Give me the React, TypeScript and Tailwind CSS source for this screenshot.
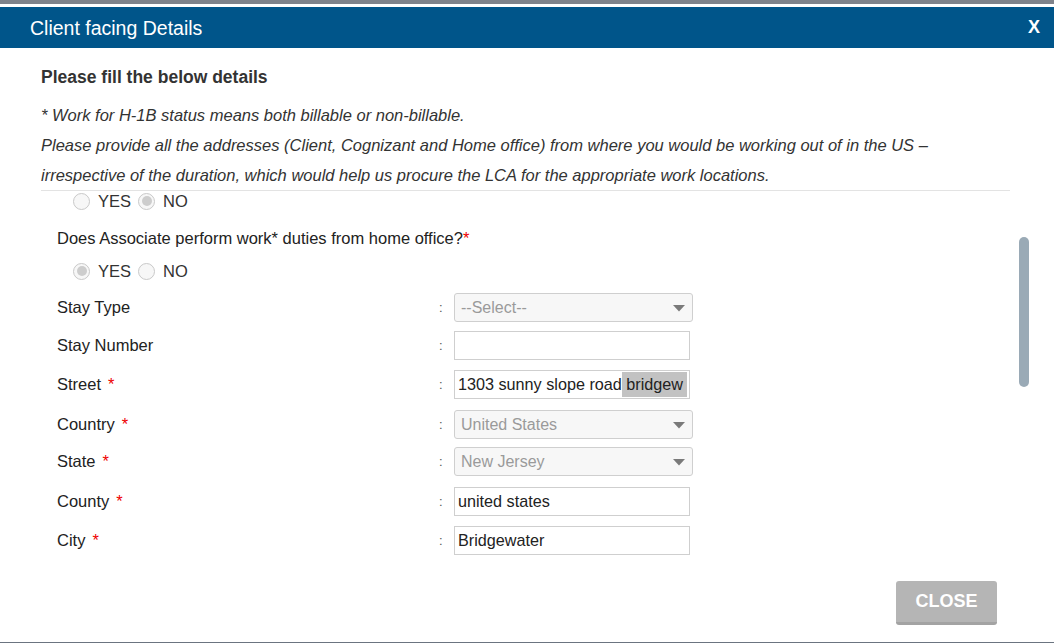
import React from 'react';

type Row = {
  label: string;
  required?: boolean;
  kind: 'select' | 'input';
  value?: string;
  h: string;
};

const rows: Row[] = [
  { label: 'Stay Type', kind: 'select', value: '--Select--', h: 'h-[38px]' },
  { label: 'Stay Number', kind: 'input', value: '', h: 'h-[39px]' },
  { label: 'Street', required: true, kind: 'input', value: 'street', h: 'h-[40px]' },
  { label: 'Country', required: true, kind: 'select', value: 'United States', h: 'h-[37px]' },
  { label: 'State', required: true, kind: 'select', value: 'New Jersey', h: 'h-[40px]' },
  { label: 'County', required: true, kind: 'input', value: 'united states', h: 'h-[39px]' },
  { label: 'City', required: true, kind: 'input', value: 'Bridgewater', h: 'h-[39px]' },
];

function Radio({ checked }: { checked?: boolean }) {
  return (
    <span className="flex h-[17px] w-[17px] items-center justify-center rounded-full border border-[#c9c9c9] bg-[#f7f7f7]">
      {checked && <span className="h-[10px] w-[10px] rounded-full bg-[#cdcdcd]" />}
    </span>
  );
}

function YesNo({ yes }: { yes: boolean }) {
  return (
    <div className="flex h-[20px] items-center pl-[32px] text-[16.5px] text-[#333]">
      <Radio checked={yes} />
      <span className="ml-[8px]">YES</span>
      <span className="ml-[7px]">
        <Radio checked={!yes} />
      </span>
      <span className="ml-[8px]">NO</span>
    </div>
  );
}

function Field({ row }: { row: Row }) {
  if (row.kind === 'select') {
    return (
      <div className="flex h-[29px] w-[239px] items-center justify-between rounded-[3px] border border-[#cfcfcf] bg-[#f7f7f7] pl-[6px] pr-[6px] text-[16px] text-[#9a9a9a]">
        <span>{row.value}</span>
        <svg width="14" height="8" viewBox="0 0 14 8">
          <path d="M1 1 L13 1 L7 7.5 Z" fill="#7a7a7a" />
        </svg>
      </div>
    );
  }
  return (
    <div className="flex h-[29px] w-[236px] items-center overflow-hidden whitespace-nowrap border border-[#cfcfcf] bg-white pl-[3px] text-[16.2px] text-[#222]">
      {row.value === 'street' ? (
        <>
          <span>1303 sunny slope road</span>
          <span className="bg-[#c2c2c2] pr-[4px]">{'\u00a0'}bridgew</span>
        </>
      ) : (
        <span>{row.value}</span>
      )}
    </div>
  );
}

export default function App() {
  return (
    <div
      className="flex h-[643px] w-[1054px] flex-col overflow-hidden bg-white text-[#333]"
      style={{ fontFamily: '"Liberation Sans", Arial, sans-serif' }}
    >
      <div className="h-[4px] bg-[#7f838b]" />
      <div className="h-[3px] bg-white" />
      <div className="flex h-[41px] items-center justify-between bg-[#00558a] pl-[30px] pr-[14px] text-white">
        <span className="pt-[2px] text-[19.5px]">Client facing Details</span>
        <span className="text-[18px] font-bold">X</span>
      </div>

      <div className="pl-[41px] pr-[44px]">
        <div className="pt-[19px] text-[17.5px] font-bold leading-[20px]">Please fill the below details</div>
        <div className="pt-[13px] text-[16.5px] italic leading-[30px] text-[#333]">
          <div>* Work for H-1B status means both billable or non-billable.</div>
          <div>
            Please provide all the addresses (Client, Cognizant and Home office) from where you would be working out of in the US –
          </div>
          <div>irrespective of the duration, which would help us procure the LCA for the appropriate work locations.</div>
        </div>
        <div className="h-px bg-[#e3e3e3]" />
      </div>

      <div className="relative h-[375px] overflow-hidden">
        <div className="pl-[41px]">
          <YesNo yes={false} />
          <div className="pl-[16px] pt-[17px] text-[16.5px] leading-[20px] text-[#222]">
            Does Associate perform work* duties from home office?<span className="text-[#e00]">*</span>
          </div>
          <div className="pt-[13px]">
            <YesNo yes={true} />
          </div>
          <div className="pt-[12px]">
            {rows.map((row) => (
              <div key={row.label} className={`flex items-start ${row.h}`}>
                <div className="flex h-[29px] w-[398px] items-center pl-[16px] text-[16.5px] text-[#222]">
                  {row.label}
                  {row.required && <span className="ml-[7px] text-[#e00]">*</span>}
                </div>
                <div className="flex h-[29px] w-[15px] items-center text-[13px] text-[#555]">:</div>
                <Field row={row} />
              </div>
            ))}
          </div>
        </div>
        <div className="absolute left-[1019px] top-[46px] h-[150px] w-[10px] rounded-full bg-[#9aaab6]" />
      </div>

      <div className="flex justify-end pr-[57px] pt-[15px]">
        <button className="h-[44px] w-[101px] rounded-[3px] border-b-[3px] border-[#a3a3a3] bg-[#b5b5b5] text-[18px] font-bold text-white">
          CLOSE
        </button>
      </div>
      <div className="flex-1" />
      <div className="h-[1px] bg-[#6b7480]" />
    </div>
  );
}
